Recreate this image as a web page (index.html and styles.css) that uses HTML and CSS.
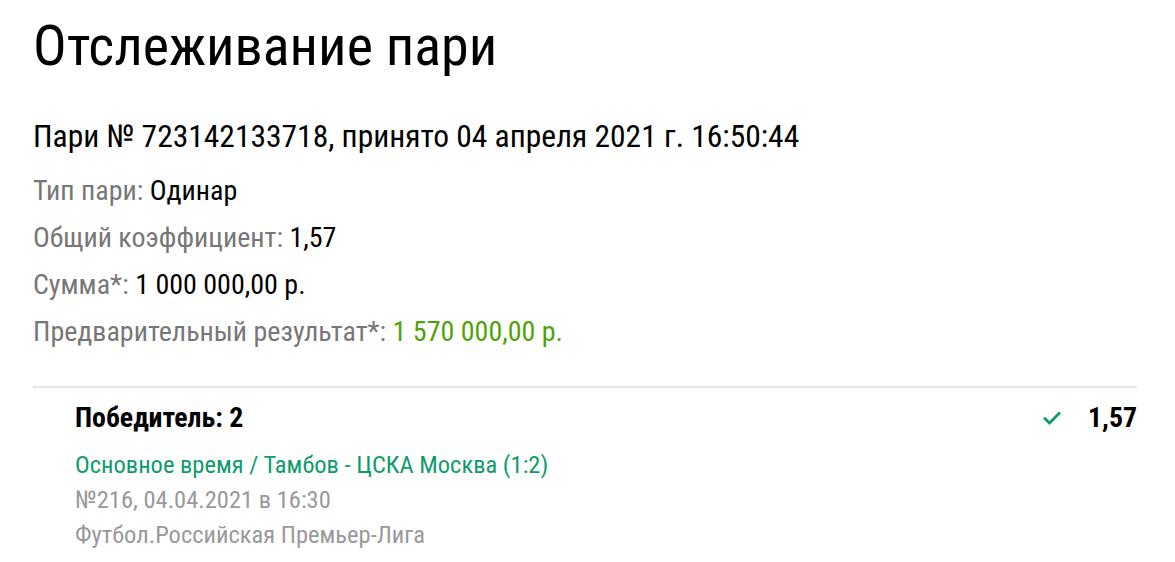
FILE: index.html
```html
<!DOCTYPE html>
<html lang="ru">
<head>
    <meta charset="UTF-8" />
    <title>Отслеживание пари</title>
    <link rel="stylesheet" href="styles.css">
</head>
<body>
    <div class="page">
        <h1>Отслеживание пари</h1>

        <div class="bet-info">
            <h2>Пари № 723142133718, принято 04 апреля 2021 г. 16:50:44</h2>
            <p><span class="label">Тип пари:</span> Одинар</p>
            <p><span class="label">Общий коэффициент:</span> 1,57</p>
            <p><span class="label">Сумма*:</span> 1 000 000,00 р.</p>
            <p><span class="label">Предварительный результат*:</span> <span class="win">1 570 000,00 р.</span></p>
        </div>

        <div class="event">
            <div class="event-head">
                <div class="outcome">Победитель: 2</div>
                <div class="odds">
                    <svg class="check" width="18" height="14" viewBox="0 0 18 14">
                        <path d="M1 6.8 L6.5 12 L17 1.5" fill="none" stroke="#0f9b6c" stroke-width="2.8"/>
                    </svg>
                    <span class="coef">1,57</span>
                </div>
            </div>
            <div class="match">Основное время / Тамбов - ЦСКА Москва (1:2)</div>
            <div class="meta">№216, 04.04.2021 в 16:30</div>
            <div class="meta">Футбол.Российская Премьер-Лига</div>
        </div>
    </div>
</body>
</html>
```

FILE: styles.css
```css
body {
    margin: 0;
    font-family: "Roboto Condensed", Roboto, "Liberation Sans", sans-serif;
    font-stretch: condensed;
    color: #000;
    background: #fff;
}

.page {
    padding: 14px 38px 0 33px;
}

h1 {
    margin: 0;
    font-size: 56px;
    font-weight: 400;
    line-height: 64px;
}

.bet-info {
    margin-top: 39px;
    padding-bottom: 31px;
    border-bottom: 2px solid #e6e6e6;
}

.bet-info h2 {
    margin: 0 0 10px;
    font-size: 31.5px;
    font-weight: 400;
    line-height: 40px;
}

.bet-info p {
    margin: 0;
    font-size: 28px;
    line-height: 47px;
}

.label {
    color: #777;
}

.win {
    color: #4fa30a;
}

.event {
    padding: 12px 0 0 42px;
}

.event-head {
    display: flex;
    justify-content: space-between;
    align-items: center;
    margin-bottom: 11px;
}

.outcome {
    font-size: 27.8px;
    font-weight: 700;
    line-height: 36px;
}

.odds {
    display: flex;
    align-items: center;
    gap: 27px;
}

.coef {
    font-size: 27.8px;
    font-weight: 700;
    line-height: 36px;
}

.match {
    color: #0f9b6c;
    font-size: 24.5px;
    line-height: 35px;
}

.meta {
    color: #999;
    font-size: 24.5px;
    line-height: 35px;
}
```
